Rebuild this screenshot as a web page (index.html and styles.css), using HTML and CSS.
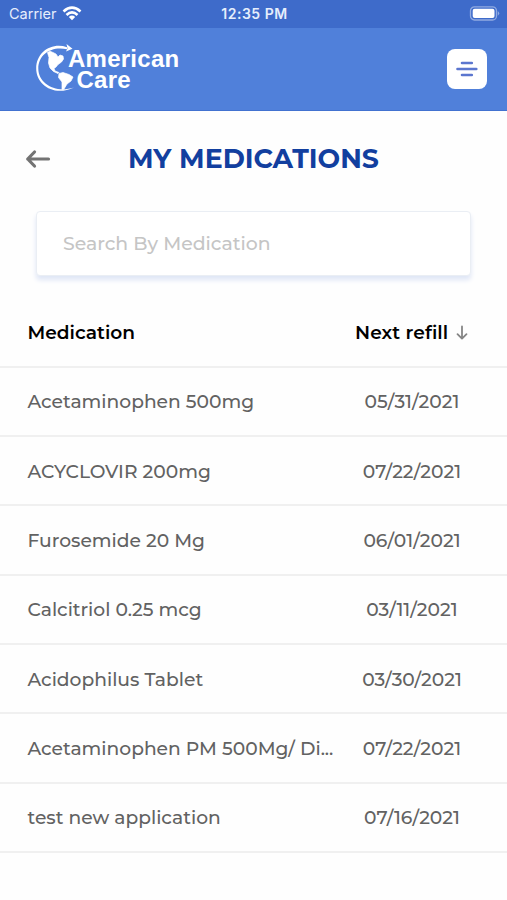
FILE: index.html
```html
<!DOCTYPE html>
<html lang="en">
<head>
<meta charset="utf-8">
<title>My Medications</title>
<link rel="stylesheet" href="styles.css">
</head>
<body>
<div class="status">
  <div class="carrier"><span>Carrier</span>
    <svg width="20" height="15" viewBox="0 0 20 15"><g fill="none" stroke="#fff" stroke-width="2.700"><path d="M1.500 5.400Q10-2.200 18.500 5.400"/><path d="M4.500 8.900Q10 3.900 15.500 8.900"/></g><path d="M6.800 10.900Q10 8.300 13.200 10.900L10 14.200z" fill="#fff"/></svg>
  </div>
  <div class="time">12:35 PM</div>
  <svg class="battery" width="31" height="15" viewBox="0 0 31 15"><rect x="1.500" y=".8" width="26" height="13.200" rx="4" fill="none" stroke="#91abe1" stroke-width="1.300"/><rect x="3.700" y="2.800" width="21.800" height="9.200" rx="2" fill="#fff"/><path d="M28.800 5Q31.600 7.300 28.800 9.700z" fill="#91abe1"/></svg>
</div>
<header class="header">
  <div class="logo">
    <svg class="globe" width="42" height="52" viewBox="0 0 42 52">
      <path d="M32 4.300C17-1 1.200 9 1.200 25.500C1.200 42 19 54 39 44.500C21 50.500 3.300 41 3.300 25.500C3.300 11 17 2.700 32 6.300z" fill="#fff"/>
      <path d="M31.500 1L37.500 5.800L31 8.500L32.500 5.500z" fill="#fff"/>
      <path d="M12.500 9.500L15 8.200L18 9.500L21 11L23 14L25 12L28 13L28.500 16L26.500 19L23 21.500L21 24L19 25.500L20 28L24 29.500L23 30.500L18.500 28.500L15 25L13.500 20L14 14.500z" fill="#fff" stroke="#fff" stroke-width=".7"/>
      <path d="M24 30.500L28 29.500L34 31.500L38 34L36 38L32 41L29 46L27 46.500L27 39L23.500 34.500z" fill="#fff" stroke="#fff" stroke-width=".7"/>
    </svg>
    <div class="wordmark"><span class="american">American</span><span class="care">Care</span></div>
  </div>
  <button class="menu" aria-label="Menu"><svg width="22" height="16" viewBox="0 0 22 16" stroke="#5b76cf" stroke-width="2.600" stroke-linecap="round"><path d="M6 2H15.800M1.500 8H20.300M6 14H15.800"/></svg></button>
</header>
<div class="titlebar">
  <svg width="26" height="20" viewBox="0 0 26 20" fill="none" stroke="#737373" stroke-width="3.200" stroke-linecap="round" stroke-linejoin="round"><path d="M23.500 10H2.700M9.500 3L2.700 10L9.500 17"/></svg>
  <h1>MY MEDICATIONS</h1>
</div>
<div class="search"><span>Search By Medication</span></div>
<div class="table">
  <div class="row head"><div class="name">Medication</div><div class="date"><span>Next refill</span><svg width="14" height="16" viewBox="0 0 14 16" fill="none" stroke="#858585" stroke-width="1.800" stroke-linecap="round" stroke-linejoin="round"><path d="M7 1.500V13.500M2.500 9.200L7 13.700L11.500 9.200"/></svg></div></div>
  <div class="row"><div class="name">Acetaminophen 500mg</div><div class="date">05/31/2021</div></div>
  <div class="row"><div class="name">ACYCLOVIR 200mg</div><div class="date">07/22/2021</div></div>
  <div class="row"><div class="name">Furosemide 20 Mg</div><div class="date">06/01/2021</div></div>
  <div class="row"><div class="name">Calcitriol 0.25 mcg</div><div class="date">03/11/2021</div></div>
  <div class="row"><div class="name">Acidophilus Tablet</div><div class="date">03/30/2021</div></div>
  <div class="row"><div class="name">Acetaminophen PM 500Mg/ Di...</div><div class="date">07/22/2021</div></div>
  <div class="row"><div class="name">test new application</div><div class="date">07/16/2021</div></div>
</div>
</body>
</html>
```
FILE: styles.css
```css
* { box-sizing: border-box; }
body { margin: 0; height: 900px; overflow: hidden; background: #fefefe; font-family: Montserrat, Inter, sans-serif; color: #626262; }
svg { display: block; flex: none; }
.status { height: 28px; background: #3e6bca; display: grid; grid-template-columns: 1fr auto 1fr; align-items: center; padding: 0 7px 0 9px; color: #e6eefc; }
.carrier { display: flex; align-items: center; gap: 5px; font: 400 14.500px/20px Inter, sans-serif; }
.carrier svg { margin-top: -2px; }
.time { font: 600 14px/20px Inter, sans-serif; letter-spacing: 0.500px; }
.battery { justify-self: end; margin-top: -2px; }
.header { height: 83px; background: #5080da; border-bottom: 1px solid #4272d0; display: flex; justify-content: space-between; align-items: center; padding: 0 20px 0 35px; }
.logo { display: flex; align-items: center; }
.wordmark { display: flex; flex-direction: column; margin-left: -9px; color: #fff; font: 700 24px/21px "Liberation Sans", sans-serif; letter-spacing: 0.250px; }
.care { margin-left: 8.500px; }
.menu { width: 40px; height: 40px; border: 0; border-radius: 8px; background: #fff; padding: 0; display: grid; place-items: center; }
.titlebar { height: 96px; padding: 0 25px; display: grid; grid-template-columns: 26px 1fr 26px; align-items: center; }
h1 { margin: 0 0 2px; text-align: center; font-size: 26.800px; font-weight: 700; color: #123f9f; }
.search { height: 65px; margin: 4px 36px 0; border: 1px solid #eaeef4; border-radius: 4px; background: #fff; box-shadow: 0 4px 5px #dfe6f6; display: flex; align-items: center; padding-left: 26px; font-size: 18.850px; font-weight: 500; color: #c5c5c5; }
.table { margin-top: 22.200px; }
.row { height: 69.350px; border-bottom: 2px solid #f0f0f0; display: grid; grid-template-columns: 327.500px 114px; padding: 1px 0 0 27.500px; align-items: center; font-size: 18.700px; font-weight: 500; white-space: nowrap; }
.date { text-align: center; }
.head { padding-top: 2px; color: #000; font-weight: 600; font-size: 18.600px; }
.head .date { display: flex; align-items: center; gap: 7px; letter-spacing: 0.100px; }
```
